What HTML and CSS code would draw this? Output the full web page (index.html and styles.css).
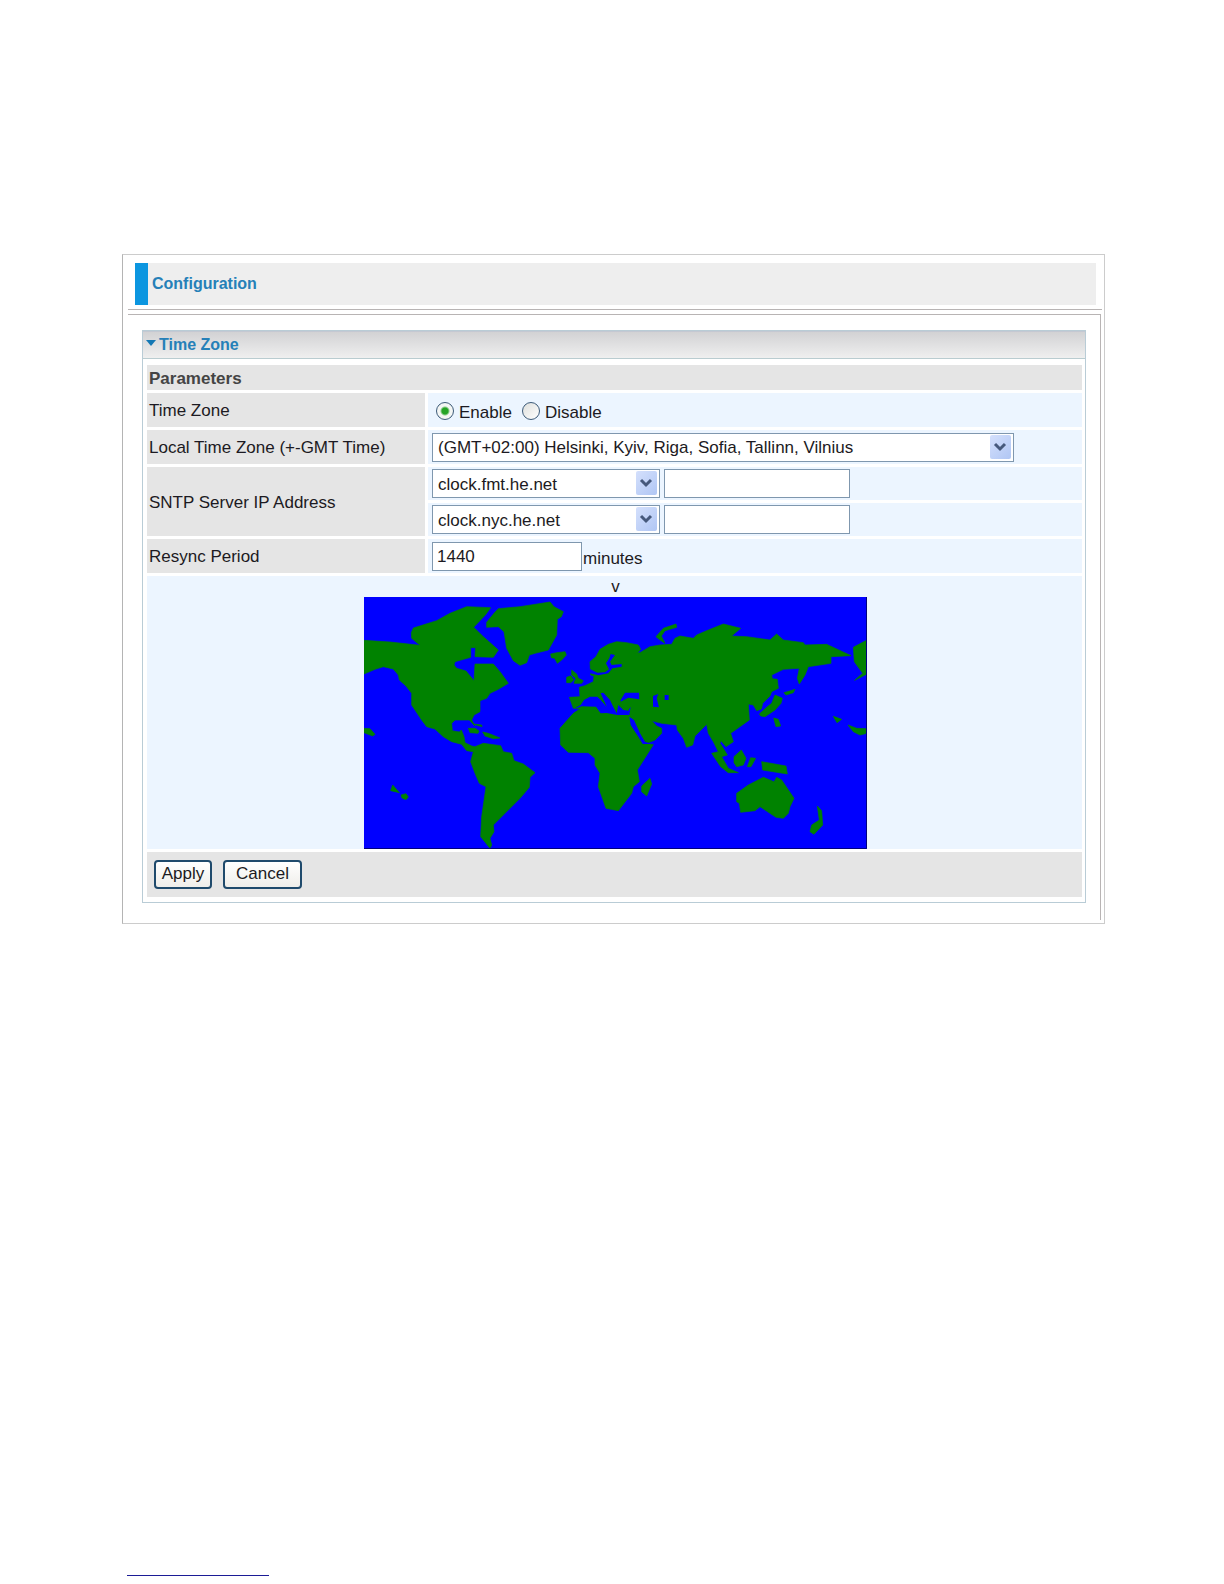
FILE: index.html
```html
<!DOCTYPE html>
<html lang="en">
<head>
<meta charset="utf-8">
<title>Configuration - Time Zone</title>
<link rel="stylesheet" href="styles.css">
</head>
<body>
<main class="frame">
  <header class="page-header"><h1>Configuration</h1></header>
  <div class="rule"></div>
  <div class="content">
    <form class="panel">
      <h2 class="panel-title">
        <svg class="caret" width="10" height="6" viewBox="0 0 10 6" aria-hidden="true"><path d="M0 0H10L5 6Z"/></svg>Time Zone
      </h2>
      <table class="params">
        <colgroup><col class="col-label"><col></colgroup>
        <tr class="row-head"><th colspan="2">Parameters</th></tr>
        <tr class="row-field">
          <th scope="row">Time Zone</th>
          <td>
            <div class="radios">
              <label><input type="radio" name="tz" checked>Enable</label>
              <label><input type="radio" name="tz">Disable</label>
            </div>
          </td>
        </tr>
        <tr class="row-field">
          <th scope="row"><label for="zone">Local Time Zone (+-GMT Time)</label></th>
          <td>
            <div class="line">
              <span class="drop drop-wide">
                <select id="zone"><option>(GMT+02:00) Helsinki, Kyiv, Riga, Sofia, Tallinn, Vilnius</option></select>
                <svg class="arrow" viewBox="0 0 21 24" aria-hidden="true"><path d="M5 9L10 14L15 9"/></svg>
              </span>
            </div>
          </td>
        </tr>
        <tr class="row-server">
          <th scope="row" rowspan="2">SNTP Server IP Address</th>
          <td>
            <div class="line">
              <span class="drop">
                <select aria-label="SNTP server 1"><option>clock.fmt.he.net</option></select>
                <svg class="arrow" viewBox="0 0 21 24" aria-hidden="true"><path d="M5 9L10 14L15 9"/></svg>
              </span>
              <input class="text address" type="text" aria-label="SNTP server 1 address">
            </div>
          </td>
        </tr>
        <tr class="row-server">
          <td>
            <div class="line">
              <span class="drop">
                <select aria-label="SNTP server 2"><option>clock.nyc.he.net</option></select>
                <svg class="arrow" viewBox="0 0 21 24" aria-hidden="true"><path d="M5 9L10 14L15 9"/></svg>
              </span>
              <input class="text address" type="text" aria-label="SNTP server 2 address">
            </div>
          </td>
        </tr>
        <tr class="row-field">
          <th scope="row"><label for="resync">Resync Period</label></th>
          <td><div class="resync"><input class="text period" id="resync" type="text" value="1440"><span>minutes</span></div></td>
        </tr>
        <tr>
          <td class="map-cell" colspan="2">
            <div class="marker">v</div>
            <svg class="map" width="503" height="252" viewBox="12 21 1509 756" role="img" aria-label="World map">
              <path class="sea" d="M12 21H1521V777H12Z"/>
              <g class="land">
                <!-- the Americas -->
                <path d="M12 151L90 156L180 166L155 145L154 128L160 114L230 92L270 70L320 50L392 53L376 75L341 112L370 140L415 180L400 202L345 200L347 173L332 173L332 202L285 215L282 225L290 235L318 243L342 272L345 222L400 222L420 245L445 280L415 298L390 310L380 325L360 332L360 365L342 375L335 390L345 408L328 390L285 390L275 400L277 422L298 426L304 420L312 440L315 458L335 468L345 470L370 460L422 467L430 485L455 490L462 512L490 522L525 548L510 562L508 592L480 625L435 670L400 705L402 725L390 745L395 765L390 775L362 740L365 680L378 590L358 580L345 550L332 515L340 485L320 482L305 463L275 455L250 440L225 417L200 410L185 390L155 345L155 310L138 288L118 270L115 255L100 237L70 230L45 238L12 252Z"/>
                <!-- Greenland, Iceland, Caribbean -->
                <path d="M380 97L402 70L415 56L480 50L570 36L582 50L610 65L604 80L592 88L590 135L565 180L525 190L508 195L500 218L480 226L460 212L440 175L432 125L415 110L380 112Z"/>
                <path d="M572 192L590 188L615 185L619 195L605 210L592 220L584 205L574 203Z"/>
                <path d="M325 415L345 415L357 423L354 430L330 428ZM368 426L385 430L420 444L400 446L375 438ZM340 402L365 405L366 410Z"/>
                <!-- Europe, Asia and Africa -->
                <path d="M628 322L660 320L658 292L675 287L700 275L702 258L692 255L690 215L708 200L720 178L745 163L770 155L800 158L835 165L842 178L832 190L810 192L840 188L870 170L900 165L935 163L945 145L960 138L1000 145L1010 135L1045 120L1090 102L1142 115L1115 138L1160 140L1230 150L1250 132L1270 150L1330 158L1335 165L1400 163L1473 197L1413 200L1413 220L1345 230L1335 255L1318 282L1312 265L1318 235L1270 238L1235 255L1237 266L1252 268L1255 295L1235 305L1230 318L1208 340L1204 357L1190 362L1180 345L1165 342L1168 390L1112 430L1120 455L1098 470L1083 452L1080 460L1090 475L1102 495L1085 500L1105 535L1135 548L1105 548L1082 530L1055 490L1075 485L1060 455L1045 430L1040 403L1005 438L998 465L980 472L970 445L952 420L950 405L905 400L875 392L890 408L905 415L905 430L885 450L860 460L880 464L832 540L838 575L820 590L815 610L775 662L738 655L715 590L720 550L705 525L705 505L685 488L625 487L602 465L600 415L640 370L660 357L640 355Z"/>
                <path d="M635 240L650 252L655 265L670 272L665 280L642 280L647 265L635 255ZM620 262L633 257L641 270L632 278L620 278ZM888 140L910 115L948 102L950 112L915 122L904 138L915 160L900 150ZM845 588L870 565L875 582L860 618L845 605Z"/>
                <!-- the Pacific -->
                <path d="M1122 500L1144 480L1158 505L1150 525L1130 530L1122 518ZM1162 530L1172 503L1187 505L1173 530ZM1205 515L1278 528L1282 552L1208 540Z"/>
                <path d="M1130 610L1165 585L1210 562L1242 575L1250 562L1265 570L1302 625L1290 650L1285 670L1270 685L1248 682L1200 650L1185 662L1142 667L1138 640L1130 635Z"/>
                <path d="M1198 372L1222 350L1235 340L1245 315L1267 325L1263 340L1245 360L1215 380L1202 378ZM1272 308L1305 298L1300 308L1278 315ZM1241 384L1255 388L1262 408L1248 410Z"/>
                <path d="M1372 648L1385 662L1388 705L1362 733L1350 725L1355 705L1378 690ZM1480 172L1521 150L1521 252L1484 271L1508 250L1483 215ZM1420 379L1445 388L1431 398ZM1464 405L1490 415L1521 416L1521 430L1500 435L1480 425ZM12 415L30 416L45 433L38 438L12 428ZM98 585L118 608L92 602ZM123 615L138 611L145 621L138 629L126 624Z"/>
              </g>
              <g class="sea">
                <!-- Mediterranean, Black Sea, Caspian, Baltic, Red Sea -->
                <path d="M640 358L662 345L672 330L690 320L712 320L722 330L740 350L722 310L730 308L750 330L757 345L770 370L775 345L790 360L805 362L812 350L808 375L772 375L740 369L722 370L708 350L665 349ZM782 330L795 308L837 308L838 328L805 323L782 335ZM879 318L895 312L890 325L897 352L879 350ZM914 315L926 315L926 330L914 330Z"/>
                <path d="M690 237L712 248L735 247L747 238L738 220L748 205L752 192L765 195L750 215L755 225L785 222L785 230L757 235L745 250L715 256L690 250ZM808 380L822 390L840 430L855 455L875 462L848 462L835 440L812 405Z"/>
              </g>
              <path class="edge" d="M12 775.5H1519.5V21"/>
            </svg>
          </td>
        </tr>
        <tr>
          <td class="actions" colspan="2">
            <div class="buttons">
              <button type="button" class="btn">Apply</button>
              <button type="button" class="btn btn-cancel">Cancel</button>
            </div>
          </td>
        </tr>
      </table>
    </form>
  </div>
</main>
<footer class="page-foot"><hr class="foot-line"></footer>
</body>
</html>
```
FILE: styles.css
```css
* { box-sizing: border-box; }

body {
  margin: 0;
  min-height: 100vh;
  padding: 254px 119px 8px 122px;
  display: flex;
  flex-direction: column;
  background: #fff;
  color: #1c1a22;
  font: 17px/20px "Liberation Sans", Arial, sans-serif;
}

.frame {
  border: 1px solid #ccc;
  border-left-color: #b4b4b4;
}

.page-header {
  margin: 8px 8px 4px 12px;
  height: 42px;
  padding-left: 4px;
  border-left: 13px solid #0c96e0;
  background: #eee;
  display: flex;
  align-items: center;
}

h1, h2 {
  margin: 0;
  font-size: 16px;
  line-height: 20px;
  color: #2580b8;
}

.rule {
  height: 1px;
  margin: 0 2px 4px 5px;
  background: #b8b4b4;
}

.content {
  margin: 0 3px 3px 5px;
  padding: 15px 14px 17px;
  border-top: 1px solid #b8b4b4;
  border-right: 1px solid #b8b4b4;
}

.panel {
  border: 1px solid #b9ccd6;
}

.panel-title {
  display: flex;
  align-items: center;
  gap: 3px;
  height: 28px;
  padding-left: 3px;
  border-top: 1px solid #c4c8d2;
  border-bottom: 1px solid #b9ccd0;
  background: linear-gradient(#d2d2d4, #efefef);
}

.caret {
  margin-bottom: 4px;
  fill: #1478b4;
}

.params {
  width: 100%;
  table-layout: fixed;
  border-spacing: 3px;
  padding: 3px 0 2px 1px;
}

.col-label { width: 278px; }

th, td {
  padding: 0 2px;
  background: #ecf5ff;
  text-align: left;
  font-weight: normal;
}

th {
  padding-top: 2px;
  background: #e5e5e5;
}

.row-head th {
  height: 25px;
  font-weight: bold;
  color: #444;
}

.row-field > * { height: 34px; }
.row-server > * { height: 33px; }
.params td { padding-left: 4px; }

.line { display: flex; gap: 4px; }

.radios {
  display: flex;
  gap: 10px;
  padding: 5px 0 0 4px;
}

.radios label {
  display: flex;
  align-items: center;
  gap: 5px;
}

.radios input {
  appearance: none;
  width: 18px;
  height: 18px;
  margin: 0 0 3px;
  border: 1px solid #3c5a78;
  border-radius: 50%;
  background: linear-gradient(135deg, #dedfdc, #fff);
}

.radios input:checked {
  background: radial-gradient(circle, #26a426 0 3px, #f4f6f4 5px);
}

.drop {
  position: relative;
  display: flex;
  width: 228px;
}

.drop-wide { width: 582px; }

select, .text {
  height: 29px;
  border: 1px solid #7f97ae;
  border-radius: 0;
  background: #fff;
  color: inherit;
  font: inherit;
}

select {
  appearance: none;
  width: 100%;
  padding: 2px 24px 0 5px;
}

.arrow {
  position: absolute;
  top: 2px;
  right: 3px;
  width: 21px;
  height: 24px;
  border-radius: 2px;
  background: linear-gradient(135deg, #d4e0fc, #b0c6f4);
  fill: none;
  stroke: #46597c;
  stroke-width: 3;
  pointer-events: none;
}

.address { width: 186px; }

.period {
  width: 150px;
  padding: 2px 4px 0;
}

.resync {
  display: flex;
  align-items: center;
  gap: 1px;
}

.resync span { padding-top: 5px; }

.params .map-cell {
  padding: 0 0 0 2px;
  text-align: center;
}

.marker { height: 21px; padding-top: 1px; }

.map {
  display: block;
  margin: 0 auto;
}

.sea { fill: #00f; }
.land { fill: #008200; stroke: #008200; stroke-width: 2; }
.edge { fill: none; stroke: #00007c; stroke-width: 3; }

.params .actions {
  height: 45px;
  padding: 0 7px;
  background: #e5e5e5;
}

.buttons { display: flex; gap: 11px; padding-bottom: 1px; }

.btn {
  height: 29px;
  width: 58px;
  padding: 0;
  border: 2px solid #1f4a6c;
  border-radius: 4px;
  background: linear-gradient(#fff, #efeeea);
  color: inherit;
  font: inherit;
}

.btn-cancel { width: 79px; }

.page-foot { margin-top: auto; padding-left: 5px; }

.foot-line {
  width: 142px;
  height: 1px;
  margin: 0;
  border: 0;
  background: #1c1c96;
}
```
